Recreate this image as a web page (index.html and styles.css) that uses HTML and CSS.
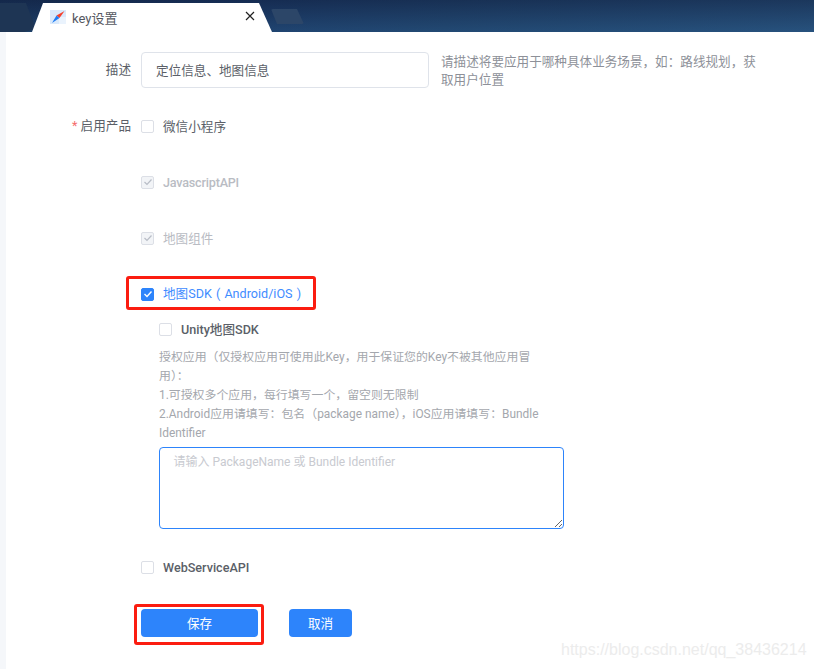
FILE: index.html
```html
<!DOCTYPE html>
<html lang="zh">
<head>
<meta charset="utf-8">
<title>key设置</title>
<link rel="stylesheet" href="styles.css">
</head>
<body>
<header class="topbar">
  <div class="tab-ghost-left"></div>
  <div class="tab">
    <svg class="tab-icon" viewBox="0 0 16 16" width="16" height="16" aria-hidden="true">
      <rect x="0" y="1" width="16" height="14" fill="#d9e9fb"/>
      <rect x="9" y="8" width="7" height="7" fill="#eaf3fd"/>
      <path d="M14.5 2 L9.5 9 L6.5 6.5 Z" fill="#f5402c"/>
      <path d="M2 14 L9.5 9 L6.5 6.5 Z" fill="#1f7cf2"/>
    </svg>
    <span class="tab-title">key设置</span>
    <svg class="tab-close" viewBox="0 0 10 10" width="10" height="10" aria-hidden="true">
      <path d="M1 1 L9 9 M9 1 L1 9" stroke="#222" stroke-width="1.2" fill="none"/>
    </svg>
  </div>
  <div class="tab-ghost-right"></div>
</header>

<main class="page">
  <div class="form">
    <div class="row row-desc">
      <label class="label">描述</label>
      <div class="desc-control">
        <div class="input">定位信息、地图信息</div>
        <p class="hint">请描述将要应用于哪种具体业务场景，如：路线规划，获取用户位置</p>
      </div>
    </div>

    <div class="row">
      <label class="label"><span class="req">*</span> 启用产品</label>
      <div class="products">
        <div class="check"><span class="box"></span><span class="check-text">微信小程序</span></div>
        <div class="check is-disabled">
          <span class="box"><svg viewBox="0 0 12 12" width="12" height="12"><path d="M2.5 6 L5 8.5 L9.5 3.5" fill="none" stroke="#b8bdc6" stroke-width="1.2"/></svg></span>
          <span class="check-text latin-tight">JavascriptAPI</span>
        </div>
        <div class="check is-disabled">
          <span class="box"><svg viewBox="0 0 12 12" width="12" height="12"><path d="M2.5 6 L5 8.5 L9.5 3.5" fill="none" stroke="#b8bdc6" stroke-width="1.2"/></svg></span>
          <span class="check-text">地图组件</span>
        </div>
        <div class="check is-checked">
          <span class="box"><svg viewBox="0 0 12 12" width="12" height="12"><path d="M2.5 6 L5 8.5 L9.5 3.5" fill="none" stroke="#fff" stroke-width="1.4"/></svg></span>
          <span class="check-text">地图SDK ( Android/iOS )</span>
        </div>
        <div class="sdk">
          <div class="check check-sub"><span class="box"></span><span class="check-text">Unity地图SDK</span></div>
          <p class="sdk-help">授权应用（仅授权应用可使用此Key，用于保证您的Key不被其他应用冒用）：<br>1.可授权多个应用，每行填写一个，留空则无限制<br>2.Android应用请填写：包名（package name），iOS应用请填写：Bundle Identifier</p>
          <textarea class="textarea" placeholder="请输入 PackageName 或 Bundle Identifier"></textarea>
        </div>
        <div class="check check-web"><span class="box"></span><span class="check-text">WebServiceAPI</span></div>
      </div>
    </div>

    <div class="actions">
      <button class="btn btn-save" type="button">保存</button>
      <button class="btn btn-cancel" type="button">取消</button>
    </div>
  </div>
</main>

<div class="mark mark-sdk"></div>
<div class="mark mark-save"></div>
<div class="watermark">https://blog.csdn.net/qq_38436214</div>
</body>
</html>
```

FILE: styles.css
```css
* { box-sizing: border-box; }
html, body { margin: 0; height: 100%; }
body {
  position: relative;
  width: 814px;
  height: 669px;
  overflow: hidden;
  background: #fff;
  font-family: Roboto, "Noto Sans CJK SC", sans-serif;
  font-size: 12.6px;
  color: #5b5f68;
}
.topbar {
  position: relative;
  display: flex;
  align-items: flex-end;
  height: 32px;
  padding-left: 32px;
  background: linear-gradient(100deg, #14284a 0%, #17305a 30%, #1c3a5f 55%, #254a72 100%);
  overflow: hidden;
}
.topbar::after {
  content: "";
  position: absolute;
  inset: 0;
  background: linear-gradient(180deg, rgba(20,40,75,.55) 0%, rgba(42,92,140,.45) 100%);
}
.tab {
  position: relative;
  z-index: 1;
  display: flex;
  align-items: center;
  width: 240px;
  height: 29px;
  padding: 0 18px 0 18px;
  background: #fff;
  clip-path: polygon(0 100%, 11px 0, 227px 0, 240px 100%);
}
.tab-icon { flex: none; margin-top: -1px; }
.tab-title { margin-left: 6px; flex: 1; font-size: 13px; color: #55585f; margin-top: -1px; }
.tab-close { flex: none; margin-right: -1px; margin-top: -3px; }
.tab-ghost-left {
  position: absolute;
  z-index: 1;
  left: -6px;
  top: 3px;
  width: 42px;
  height: 29px;
  background: #1e3554;
  clip-path: polygon(0 0, 32px 0, 42px 26px, 30px 100%, 0 100%);
}
.tab-ghost-right {
  position: absolute;
  z-index: 1;
  left: 271px;
  top: 9px;
  width: 33px;
  height: 15px;
  background: #2c4668;
  border-radius: 2px;
  clip-path: polygon(0 0, 26px 0, 33px 100%, 6px 100%);
}
.page {
  height: 637px;
  padding-top: 20px;
  border-left: 6px solid #f5f7fa;
}
.form { width: 760px; }
.row {
  display: grid;
  grid-template-columns: 125px 1fr;
  column-gap: 10px;
}
.row-desc { margin-bottom: 27px; }
.label {
  text-align: right;
  line-height: 36px;
  height: 36px;
  color: #5b5f68;
}
.row-desc .label { line-height: 35px; }
.row:not(.row-desc) .label { line-height: 20px; height: 20px; }
.req { color: #f56c6c; }
.desc-control { display: flex; gap: 12px; }
.input {
  flex: none;
  width: 288px;
  height: 36px;
  padding: 0 14px;
  line-height: 35px;
  border: 1px solid #dfe3ea;
  border-radius: 4px;
  color: #5b5f68;
}
.hint {
  margin: 1px 0 0;
  width: 318px;
  line-height: 18px;
  color: #8d9098;
}
.products { display: flex; flex-direction: column; }
.check {
  display: flex;
  align-items: center;
  gap: 9px;
  height: 20px;
  margin-bottom: 36px;
}
.box {
  flex: none;
  display: flex;
  align-items: center;
  justify-content: center;
  width: 13px;
  height: 13px;
  border: 1px solid #dcdfe6;
  border-radius: 2px;
  background: #fff;
}
.box svg { display: block; flex: none; }
.check-text { line-height: 20px; padding-top: 1px; color: #5b5f68; }
.latin-tight { letter-spacing: -0.2px; font-weight: 500; }
.is-disabled .box { background: #f2f4f7; }
.is-disabled .check-text { color: #b9bcc3; }
.is-checked .box { background: #2d84fb; border-color: #2d84fb; }
.is-checked .check-text { color: #3f8cff; word-spacing: 1px; padding-top: 0; }
.is-checked { margin-bottom: 15px; }
.sdk { padding-left: 18px; margin-bottom: 28px; }
.check-sub { margin-bottom: 0; font-weight: 500; }
.sdk-help {
  margin: 9px 0 4px;
  width: 383px;
  font-size: 11.9px;
  line-height: 19px;
  color: #a4a7ad;
}
.textarea {
  display: block;
  width: 405px;
  height: 82px;
  padding: 5px 14px 6px 13.5px;
  border: 1px solid #2d84fb;
  border-radius: 4px;
  outline: none;
  resize: vertical;
  font-family: inherit;
  font-size: 12px;
  line-height: 18px;
}
.textarea::placeholder { color: #c8cad0; opacity: 1; }
.check-web { margin-bottom: 0; font-weight: 500; }
.actions {
  display: flex;
  gap: 31px;
  margin: 32px 0 0 135px;
}
.btn {
  height: 28px;
  border: 0;
  border-radius: 4px;
  background: #2d84fb;
  color: #fff;
  font-family: inherit;
  font-size: 12.6px;
  padding: 0 0 2px;
}
.btn-save { width: 117px; }
.btn-cancel { width: 63px; }
.mark {
  position: absolute;
  border: 3px solid #fb1c10;
  border-radius: 3px;
  pointer-events: none;
}
.mark-sdk { left: 126px; top: 276px; width: 190px; height: 34px; }
.mark-save { left: 134px; top: 604px; width: 130px; height: 41px; }
.watermark {
  position: absolute;
  left: 561px;
  top: 640px;
  font-family: "Liberation Sans", sans-serif;
  font-size: 16px;
  line-height: 20px;
  color: #ececec;
  white-space: nowrap;
}
```
